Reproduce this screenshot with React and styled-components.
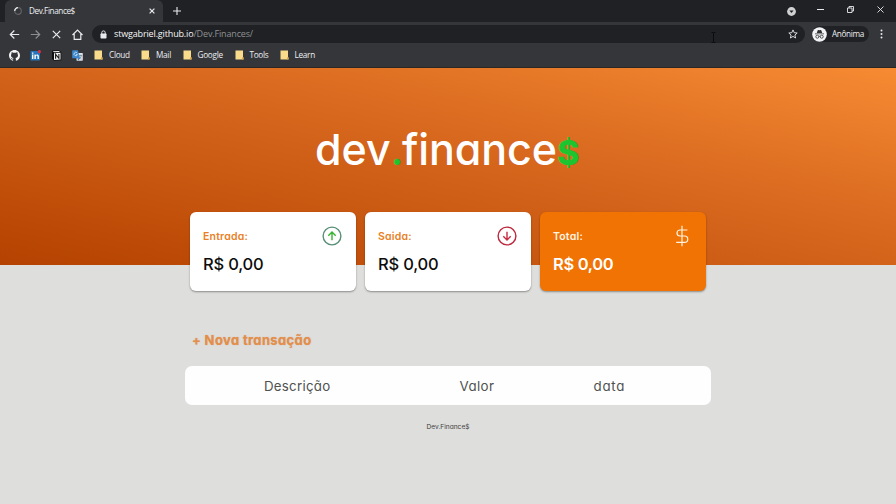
import React from "react";
import styled, { createGlobalStyle } from "styled-components";

const Global = createGlobalStyle`
  * { box-sizing: border-box; }
  body { margin: 0; background: #dededd; overflow: hidden; }
  svg { display: block; flex: none; }
`;

const Window = styled.div`
  width: 896px;
  height: 504px;
  display: flex;
  flex-direction: column;
  background: #dededd;
  font-family: Inter, "Open Sans", sans-serif;
  font-feature-settings: "cv11";
  overflow: hidden;
`;

const Chrome = styled.div`
  flex: none;
  height: 68px;
  background: #35363a;
  border-bottom: 1px solid #2b2724;
  color: #eceef1;
  font: 500 8.2px/12px "Open Sans", "Noto Sans", sans-serif;
  letter-spacing: -0.28px;
  white-space: nowrap;
`;

const TabStrip = styled.div`
  display: flex;
  align-items: flex-end;
  height: 22px;
  padding-left: 5px;
  background: #202124;
`;

const Tab = styled.div`
  display: flex;
  align-items: center;
  width: 158px;
  height: 22px;
  padding: 0 8px 0 8px;
  border-radius: 6px 6px 0 0;
  background: #35363a;
`;

const TabTitle = styled.span`
  flex: 1;
  margin-left: 6px;
  letter-spacing: -0.42px;
`;

const NewTab = styled.div`
  margin: 0 auto 7px 10px;
`;

const WindowControls = styled.div`
  display: flex;
  align-items: center;
  height: 22px;
  padding: 0 12px 3px 0;
`;

const Control = styled.div`
  margin-left: ${(p) => p.$gap}px;
  margin-top: ${(p) => p.$drop || 0}px;
`;

const Toolbar = styled.div`
  display: flex;
  align-items: center;
  height: 24px;
  padding: 0 13px 0 9px;
`;

const NavButtons = styled.div`
  display: flex;
  gap: 10px;
  width: 83px;
`;

const AddressBar = styled.div`
  display: flex;
  align-items: center;
  flex: 1;
  height: 18px;
  margin-right: 7px;
  padding: 0 7px 0 8px;
  border-radius: 9px;
  background: #202124;
`;

const Address = styled.span`
  flex: 1;
  margin-left: 7px;
  font-size: 9px;
  letter-spacing: -0.15px;
  color: #f6f7f8;
`;

const AddressPath = styled.span`
  font-weight: 400;
  color: #8d9195;
`;

const Profile = styled.div`
  display: flex;
  align-items: center;
  gap: 5px;
  width: 57px;
  height: 16px;
  margin-right: 11px;
  border-radius: 8px;
  background: #202124;
`;

const ProfileName = styled.span`
  letter-spacing: -0.36px;
`;

const Bookmarks = styled.div`
  display: flex;
  align-items: center;
  height: 18px;
  padding-left: 9px;
`;

const SiteIcons = styled.div`
  display: flex;
  gap: 10px;
  width: 85px;
`;

const Bookmark = styled.div`
  display: flex;
  align-items: center;
  gap: 6px;
  width: ${(p) => p.$width}px;
`;

const TextCursor = styled.div`
  position: absolute;
  left: 711px;
  top: 32px;
`;

const Header = styled.header`
  flex: none;
  display: flex;
  flex-direction: column;
  align-items: center;
  height: 197px;
  padding-top: 53px;
  background: linear-gradient(to top right, #b54200 0%, #da6b20 62%, #f68b33 100%);
`;

const Logo = styled.h1`
  display: flex;
  align-items: baseline;
  width: 266px;
  height: 56px;
  margin: 0;
  font-size: 43px;
  line-height: 56px;
  font-weight: 500;
  color: #fff;
`;

const LogoPart = styled.span`
  width: ${(p) => p.$width}px;
  letter-spacing: ${(p) => p.$spacing || 0}px;
`;

const LogoDot = styled(LogoPart)`
  color: #1cc42f;
`;

const LogoSign = styled(LogoDot)`
  font-size: 34px;
  font-weight: 800;
`;

const Cards = styled.section`
  flex: none;
  display: grid;
  grid-template-columns: repeat(3, 166.3px);
  gap: 8.7px;
  height: 79px;
  margin: -53px 0 0 190px;
`;

const Card = styled.article`
  padding: 14px 14px 0 13px;
  border-radius: 6px;
  background: ${(p) => (p.$total ? "#f07304" : "#fff")};
  color: ${(p) => (p.$total ? "#fff" : "#0c0c0c")};
  box-shadow: 0 1px 2px rgba(0, 0, 0, 0.38);
`;

const CardTop = styled.div`
  display: flex;
  align-items: center;
  justify-content: space-between;
  height: 20px;
`;

const CardLabel = styled.h2`
  margin: 0;
  padding-top: 1px;
  font-size: 10.5px;
  line-height: 14px;
  font-weight: 600;
  letter-spacing: ${(p) => p.$spacing}px;
  color: ${(p) => (p.$total ? "#fff5e4" : "#e97f26")};
`;

const Amount = styled.p`
  margin: 8px 0 0;
  font-size: 16.5px;
  line-height: 20px;
  font-weight: ${(p) => (p.$total ? 600 : 500)};
  letter-spacing: ${(p) => (p.$total ? -0.32 : -0.2)}px;
`;

const NewTransaction = styled.a`
  align-self: flex-start;
  margin: 39px 0 0 192px;
  font-size: 13px;
  line-height: 20px;
  font-weight: 700;
  letter-spacing: 0.36px;
  color: #e58e49;
  text-shadow: 0 0 1px rgba(190, 110, 50, 0.5);
`;

const TableHead = styled.div`
  flex: none;
  display: grid;
  grid-template-columns: 195.5px 134px 1fr;
  align-items: center;
  width: 526px;
  height: 39px;
  margin: 16px 0 0 185px;
  padding-left: 79px;
  border-radius: 7px;
  background: #fefefe;
`;

const Column = styled.span`
  font-size: 13.3px;
  line-height: 18px;
  letter-spacing: ${(p) => p.$spacing}px;
  color: #4e514f;
`;

const Footer = styled.footer`
  margin-top: 16px;
  text-align: center;
  font-size: 6.6px;
  line-height: 12px;
  color: #3e4140;
`;

const Line = ({ d, w = 11, h = 11, color = "#e8eaed", stroke = 1.2, box }) => (
  <svg width={w} height={h} viewBox={box || `0 0 ${w} ${h}`} fill="none" stroke={color} strokeWidth={stroke}>
    <path d={d} />
  </svg>
);

const Spinner = () => (
  <svg width="10" height="10" viewBox="0 0 10 10" fill="none">
    <circle cx="5" cy="5" r="3.3" stroke="#606266" strokeWidth="1.2" />
    <path d="M1.7 5A3.3 3.3 0 0 1 5 1.7" stroke="#e8eaed" strokeWidth="1.3" />
  </svg>
);

const Lock = () => (
  <svg width="7" height="9" viewBox="0 0 7 9">
    <path d="M1.8 4V2.6a1.7 1.7 0 0 1 3.4 0V4" fill="none" stroke="#e8eaed" />
    <rect x=".5" y="3.6" width="6" height="4.8" rx=".7" fill="#e8eaed" />
  </svg>
);

const Incognito = () => (
  <svg width="15" height="15" viewBox="0 0 15 15">
    <circle cx="7.5" cy="7.5" r="7.3" fill="#f1f3f4" />
    <path d="M4.8 6 5.6 3.4q.2-.6.8-.4l1.1.3 1.1-.3q.6-.2.8.4L10.2 6zM3 6.5h9v.8H3z" fill="#303134" />
    <g fill="none" stroke="#303134" strokeWidth=".8">
      <circle cx="5.3" cy="9.7" r="1.5" />
      <circle cx="9.7" cy="9.7" r="1.5" />
      <path d="M6.8 9.5q.7-.4 1.4 0" />
    </g>
  </svg>
);

const GitHub = () => (
  <svg width="11" height="11" viewBox="0 0 16 16" fill="#f5f5f5">
    <path d="M8 0C3.58 0 0 3.58 0 8c0 3.54 2.29 6.53 5.47 7.59.4.07.55-.17.55-.38 0-.19-.01-.82-.01-1.49-2.01.37-2.53-.49-2.69-.94-.09-.23-.48-.94-.82-1.13-.28-.15-.68-.52-.01-.53.63-.01 1.08.58 1.23.82.72 1.21 1.87.87 2.33.66.07-.52.28-.87.51-1.07-1.78-.2-3.64-.89-3.64-3.95 0-.87.31-1.59.82-2.15-.08-.2-.36-1.02.08-2.12 0 0 .67-.21 2.2.82a7.6 7.6 0 0 1 4 0c1.53-1.04 2.2-.82 2.2-.82.44 1.1.16 1.92.08 2.12.51.56.82 1.27.82 2.15 0 3.07-1.87 3.75-3.65 3.95.29.25.54.73.54 1.48 0 1.07-.01 1.93-.01 2.2 0 .21.15.46.55.38A8 8 0 0 0 16 8c0-4.42-3.58-8-8-8z" />
  </svg>
);

const LinkedIn = () => (
  <svg width="11" height="11" viewBox="0 0 11 11">
    <rect x=".5" y="1" width="9.5" height="9.5" rx=".8" fill="#2573b8" />
    <path d="M2 4.5h1.4V9H2zM2 2.5h1.4v1.2H2zM4.4 4.5h1.3v.7c.8-1.3 3.2-1.1 3.2 1.2V9H7.5V6.6c0-1.4-1.7-1.3-1.7 0V9H4.4z" fill="#fff" />
    <circle cx="9.4" cy="1.7" r="1.6" fill="#d9304a" />
  </svg>
);

const Notion = () => (
  <svg width="11" height="11" viewBox="0 0 11 11">
    <path d="M1 1.2Q1 .6 1.600.600L7.800.3 10.300 2v8.200l-7.300.5L1 8.600z" fill="#0f0f10" />
    <path d="M1.600 1.300 7.600.9l1.500 1-6 .4zM3 3.200l6.500-.4v6.800l-6.500.4z" fill="#f4f4f4" />
    <path d="M4.600 8.700V4.300l3.300 4V4" fill="none" stroke="#171717" strokeWidth="1.100" />
  </svg>
);

const Translate = () => (
  <svg width="11" height="11" viewBox="0 0 11 11">
    <rect x="4.5" y="3" width="6.3" height="7.7" rx=".6" fill="#dfe3e8" />
    <path d="M6.6 5.5h3.5M8.3 4.7v.8M9.5 5.5Q9 8 7 8.9M7.1 6.8l2.4 2.3" fill="none" stroke="#5d6f80" strokeWidth=".6" />
    <path d="M.8.3h5l2.2 8H.8Q.2 8.3.2 7.7V.9Q.2.3.8.3z" fill="#3d87cc" />
    <path d="M5.1 3a1.7 1.7 0 1 0 .3 1.500H4" fill="none" stroke="#d5e8fa" strokeWidth=".8" />
    <path d="M5.5 8.300H8l-1.800 2.200z" fill="#2862a5" />
  </svg>
);

const Folder = () => (
  <svg width="9" height="10" viewBox="0 0 9 10">
    <path d="M.5.5h7.500V7l.5.7v1.800h-8z" fill="#f8dc8c" />
    <path d="M7 9.500V7.800l.9-.8.6.7v1.800z" fill="#dda345" />
  </svg>
);

const ArrowCircle = ({ down, ring, color }) => (
  <svg width="20" height="20" viewBox="0 0 20 20" fill="none">
    <circle cx="10" cy="10" r="8.9" stroke={ring} strokeWidth="1.400" />
    <path d={down ? "M10 5.700v8M6.300 10.300l3.700 3.600 3.700-3.600" : "M10 14.300v-8M6.300 9.700 10 6.100l3.700 3.600"} stroke={color} strokeWidth="1.400" />
  </svg>
);

const Dollar = () => (
  <svg width="20" height="22" viewBox="0 0 20 22" fill="none" stroke="#fff3e2" strokeWidth="1.200">
    <path d="M10 .8v20.400M15.400 5H8a3 3 0 0 0 0 6h4.600a3.150 3.150 0 0 1 0 6.300H4.200" />
  </svg>
);

const folders = [["Cloud", 47], ["Mail", 41.5], ["Google", 52], ["Tools", 45], ["Learn", 40]];

export default function App() {
  return (
    <Window>
      <Global />
      <Chrome>
        <TabStrip>
          <Tab>
            <Spinner />
            <TabTitle>Dev.Finance$</TabTitle>
            <Line w={6} h={6} d="M.6.6l4.800 4.800M5.400.6.6 5.400" />
          </Tab>
          <NewTab><Line w={8} h={8} d="M4 0v8M0 4h8" stroke={1.1} /></NewTab>
          <WindowControls>
            <Control $gap={0} $drop={4}>
              <svg width="9" height="9" viewBox="0 0 9 9">
                <circle cx="4.5" cy="4.5" r="4.4" fill="#d0d1d3" />
                <path d="M2.400 3.500h4.200l-2.100 2.400z" fill="#202124" />
              </svg>
            </Control>
            <Control $gap={21}><Line w={7} h={7} d="M0 3.500h7" stroke={1} /></Control>
            <Control $gap={23}><Line w={7} h={7} d="M.5 2h4.500v4.500H.5zM2 2V.5h4.500V5H5" stroke={0.9} /></Control>
            <Control $gap={23.5}><Line w={7} h={7} d="M.5.5l6 6M6.500.5l-6 6" stroke={0.9} /></Control>
          </WindowControls>
        </TabStrip>
        <Toolbar>
          <NavButtons>
            <Line d="M10.200 5.500H1.500M5.300 1.500l-4 4 4 4" />
            <Line d="M.8 5.500h8.700M5.700 1.500l4 4-4 4" color="#8b8d90" />
            <Line d="M1.800 1.800l7.400 7.400M9.200 1.800 1.800 9.200" />
            <Line d="M.5 6 5.500 1l5 5M2.200 5v5.300h6.600V5" />
          </NavButtons>
          <AddressBar>
            <Lock />
            <Address>stwgabriel.github.io<AddressPath>/Dev.Finances/</AddressPath></Address>
            <Line w={10} h={10} stroke={0.9} d="M5 .9l1.200 2.800 3 .3-2.300 2 .7 3L5 7.400 2.400 9l.7-3-2.300-2 3-.3z" />
          </AddressBar>
          <Profile>
            <Incognito />
            <ProfileName>Anônima</ProfileName>
          </Profile>
          <svg width="3" height="10" viewBox="0 0 3 10" fill="#e8eaed">
            <circle cx="1.5" cy="1.5" r="1" />
            <circle cx="1.5" cy="5" r="1" />
            <circle cx="1.5" cy="8.5" r="1" />
          </svg>
        </Toolbar>
        <Bookmarks>
          <SiteIcons>
            <GitHub />
            <LinkedIn />
            <Notion />
            <Translate />
          </SiteIcons>
          {folders.map(([name, width]) => (
            <Bookmark key={name} $width={width}><Folder />{name}</Bookmark>
          ))}
        </Bookmarks>
        <TextCursor>
          <Line w={5} h={11} color="#07080a" stroke={0.8} d="M.5.5H2l.5.5.5-.5h1.500M2.500 1v9M.5 10.500H2l.5-.5.5.5h1.500" />
        </TextCursor>
      </Chrome>
      <Header>
        <Logo>
          <LogoPart $width={75.5}>dev</LogoPart>
          <LogoDot $width={11.5} $spacing={-1.6}>.</LogoDot>
          <LogoPart $width={155} $spacing={-0.1}>finance</LogoPart>
          <LogoSign $width={24}>$</LogoSign>
        </Logo>
      </Header>
      <Cards>
        <Card>
          <CardTop>
            <CardLabel $spacing={0.2}>Entrada:</CardLabel>
            <ArrowCircle ring="#588f76" color="#35b42f" />
          </CardTop>
          <Amount>R$ 0,00</Amount>
        </Card>
        <Card>
          <CardTop>
            <CardLabel $spacing={0.2}>Saida:</CardLabel>
            <ArrowCircle down ring="#be263d" color="#c52b43" />
          </CardTop>
          <Amount>R$ 0,00</Amount>
        </Card>
        <Card $total>
          <CardTop>
            <CardLabel $total $spacing={0.2}>Total:</CardLabel>
            <Dollar />
          </CardTop>
          <Amount $total>R$ 0,00</Amount>
        </Card>
      </Cards>
      <NewTransaction>+ Nova transação</NewTransaction>
      <TableHead>
        <Column $spacing={0.25}>Descrição</Column>
        <Column $spacing={0.4}>Valor</Column>
        <Column $spacing={0.75}>data</Column>
      </TableHead>
      <Footer>Dev.Finance$</Footer>
    </Window>
  );
}
